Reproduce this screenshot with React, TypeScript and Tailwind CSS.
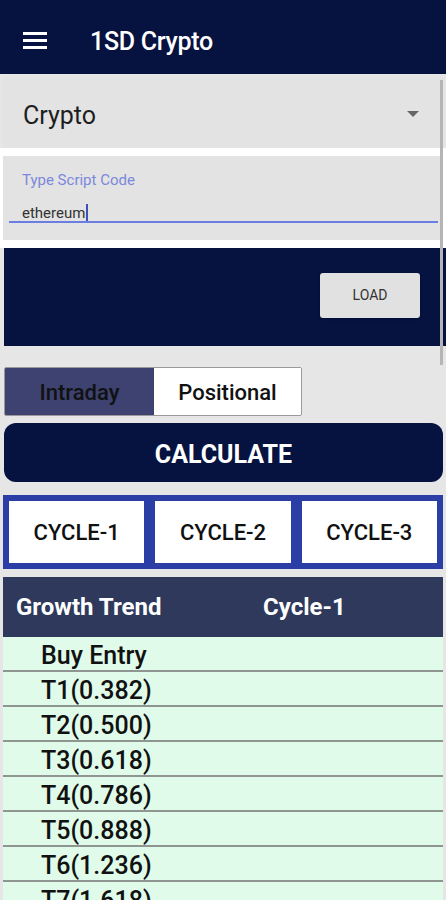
const rows = [
  'Buy Entry',
  'T1(0.382)',
  'T2(0.500)',
  'T3(0.618)',
  'T4(0.786)',
  'T5(0.888)',
  'T6(1.236)',
  'T7(1.618)',
]

export default function App() {
  return (
    <div className="relative w-[446px] h-[900px] overflow-hidden bg-[#e6e6e6] font-['Roboto',sans-serif]">
      {/* app bar */}
      <div className="flex h-[74px] items-center bg-[#06123f] pt-[10px] text-white">
        <svg className="ml-[23px] mb-[4px]" width="24" height="17" viewBox="0 0 24 17">
          <rect x="0" y="0" width="24" height="3" fill="white" />
          <rect x="0" y="7" width="24" height="3" fill="white" />
          <rect x="0" y="14" width="24" height="3" fill="white" />
        </svg>
        <span className="ml-[43px] text-[25px] font-medium tracking-[-0.3px]">1SD Crypto</span>
      </div>

      {/* spinner */}
      <div className="mt-[3px] px-[3px]">
        <div className="flex h-[71px] items-center justify-between bg-[#e3e3e3] pl-[20px] pr-[24px] pt-[6px]">
          <span className="text-[25px] text-[#1e1e1e]">Crypto</span>
          <span className="mb-[4px] h-0 w-0 border-x-[6px] border-t-[6px] border-x-transparent border-t-[#666]" />
        </div>
      </div>
      <div className="h-[8px] bg-white" />

      {/* text field */}
      <div className="bg-white px-[3px]">
        <div className="h-[84px] bg-[#e3e3e3] pl-[19px] pt-[13px]">
          <div className="text-[15px] text-[#7b88dc]">Type Script Code</div>
          <div className="mt-[10px] flex items-center text-[15px] text-[#333]">
            ethereum<span className="ml-[1px] h-[18px] w-[2px] bg-[#3f51b5]" />
          </div>
        </div>
      </div>
      <div className="relative h-[8px] bg-white">
        <div className="absolute left-[9px] right-[8px] top-[-19px] h-[2px] bg-[#6a7de0]" />
      </div>

      {/* load bar */}
      <div className="ml-[4px] flex h-[98px] items-center justify-end bg-[#06123f] pr-[26px]">
        <button className="mb-[4px] h-[45px] w-[100px] rounded-[3px] bg-[#e1e1e1] text-[14px] text-[#333] shadow">
          LOAD
        </button>
      </div>

      {/* mode toggle */}
      <div className="mt-[21px] ml-[4px] flex h-[49px] w-[298px] overflow-hidden rounded-[2px] border border-[#9a9a9a]">
        <div className="flex w-[149px] items-center justify-center bg-[#3d4270] pt-[2px] text-[22px] font-medium text-[#111]">
          Intraday
        </div>
        <div className="flex flex-1 items-center justify-center bg-white pt-[2px] text-[22px] font-medium text-[#111]">
          Positional
        </div>
      </div>

      <button className="mt-[7px] ml-[4px] flex h-[59px] w-[439px] items-center justify-center rounded-[12px] bg-[#06123f] pt-[4px] text-[25px] font-bold text-white">
        CALCULATE
      </button>

      {/* cycles */}
      <div className="mt-[13px] ml-[3px] flex h-[74px] w-[440px] gap-[11px] bg-[#2b3ea6] p-[6px]">
        {['CYCLE-1', 'CYCLE-2', 'CYCLE-3'].map((c) => (
          <div key={c} className="flex flex-1 items-center justify-center bg-white text-[22px] font-medium text-[#111]">
            {c}
          </div>
        ))}
      </div>

      {/* table */}
      <div className="mt-[8px] ml-[3px] w-[440px]">
        <div className="flex h-[60px] items-center bg-[#2e395b] text-[24px] font-bold text-white">
          <span className="ml-[13px] w-[247px]">Growth Trend</span>
          <span>Cycle-1</span>
        </div>
        {rows.map((r) => (
          <div
            key={r}
            className="flex h-[35px] items-center border-b-2 border-[#8f9691] bg-[#e0fbea] pl-[38px] pt-[4px] text-[25px] font-medium text-[#111]"
          >
            {r}
          </div>
        ))}
      </div>

      {/* scrollbar */}
      <div className="absolute right-[3px] top-[80px] h-[285px] w-[3px] bg-[#b5b5b5]" />
    </div>
  )
}
